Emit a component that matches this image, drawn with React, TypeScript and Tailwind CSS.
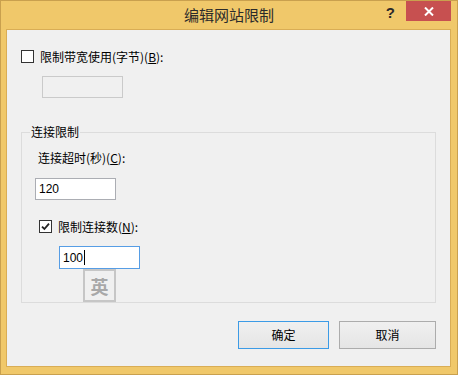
const font = { fontFamily: '"Microsoft YaHei", "Noto Sans CJK SC", "Liberation Sans", sans-serif' }

function Checkbox({ checked }: { checked?: boolean }) {
  return (
    <span className="flex h-[13px] w-[13px] shrink-0 items-center justify-center border border-[#333] bg-white">
      {checked ? (
        <svg width="9" height="9" viewBox="0 0 9 9">
          <path d="M1 4.6 L3.4 7 L8 1.6" fill="none" stroke="#222" strokeWidth="1.8" />
        </svg>
      ) : null}
    </span>
  )
}

export default function App() {
  return (
    <div className="h-[376px] w-[459px] bg-white text-[12px] leading-[16px] text-black" style={font}>
      <div className="relative h-[375px] w-[458px] border border-[#c9a04e] bg-[#f0c86a] pt-[28px] pb-[7px] pl-[5px] pr-[6px]">
        {/* title bar */}
        <div className="absolute left-0 right-0 top-0 flex h-[28px] items-center justify-center text-[15px] leading-[20px] text-[#2b2b2b]">
          编辑网站限制
        </div>
        <div className="absolute right-[62px] top-[4px] text-[15px] font-bold leading-[16px] text-[#2a2a2a]" style={{ fontFamily: '"Liberation Sans", sans-serif' }}>?</div>
        <button className="absolute right-[6px] top-0 flex h-[20px] w-[45px] items-center justify-center bg-[#c75050]">
          <svg width="10" height="9" viewBox="0 0 10 9">
            <path d="M1 0.5 L9 8.5 M9 0.5 L1 8.5" stroke="#fff" strokeWidth="2" />
          </svg>
        </button>

        {/* client area */}
        <div className="h-full w-full border border-[#d9ad55] bg-[#f0f0f0] pt-[20px] pl-[14px]">
          <div className="flex h-[13px] items-center gap-[6px]">
            <Checkbox />
            <span className="whitespace-nowrap">限制带宽使用(字节)(<u>B</u>):</span>
          </div>
          <div className="ml-[21px] mt-[13px] h-[22px] w-[81px] border border-[#cacaca] bg-[#f0f0f0]" />

          <div className="mt-[34px] h-[171px] w-[415px] border border-[#dcdcdc]">
            <div className="-mt-[8px] ml-[8px] w-fit bg-[#f0f0f0] px-[1px] leading-[14px]">连接限制</div>
            <div className="ml-[16px] mt-[11px] whitespace-nowrap">连接超时(秒)(<u>C</u>):</div>
            <div className="ml-[13px] mt-[12px] flex h-[22px] w-[81px] items-center border border-[#abadb3] bg-white pl-[3px]" style={{ fontFamily: '"Segoe UI", "Liberation Sans", sans-serif' }}>
              120
            </div>
            <div className="ml-[17px] mt-[20px] flex h-[13px] items-center gap-[6px]">
              <Checkbox checked />
              <span className="whitespace-nowrap">限制连接数(<u>N</u>):</span>
            </div>
            <div className="relative ml-[37px] mt-[13px] h-[23px] w-[81px]">
              <div className="flex h-full w-full items-center border border-[#569de5] bg-white pl-[3px]" style={{ fontFamily: '"Segoe UI", "Liberation Sans", sans-serif' }}>
                100
                <span className="ml-[1px] h-[15px] w-[1px] bg-black" />
              </div>
              <div className="absolute left-[24px] top-full flex h-[33px] w-[33px] items-center justify-center border-2 border-[#c6c6c6] bg-[#f0f0f0] text-[18px] font-bold leading-[20px] text-[#a8a8a8]">
                英
              </div>
            </div>
          </div>

          <div className="mt-[18px] flex justify-end gap-[10px] pr-[14px]">
            <button className="flex h-[28px] w-[91px] items-center justify-center border border-[#3c9be6] bg-gradient-to-b from-[#f0f0f0] to-[#e5e5e5]">
              确定
            </button>
            <button className="flex h-[28px] w-[97px] items-center justify-center border border-[#acacac] bg-gradient-to-b from-[#f0f0f0] to-[#e5e5e5]">
              取消
            </button>
          </div>
        </div>
      </div>
    </div>
  )
}
